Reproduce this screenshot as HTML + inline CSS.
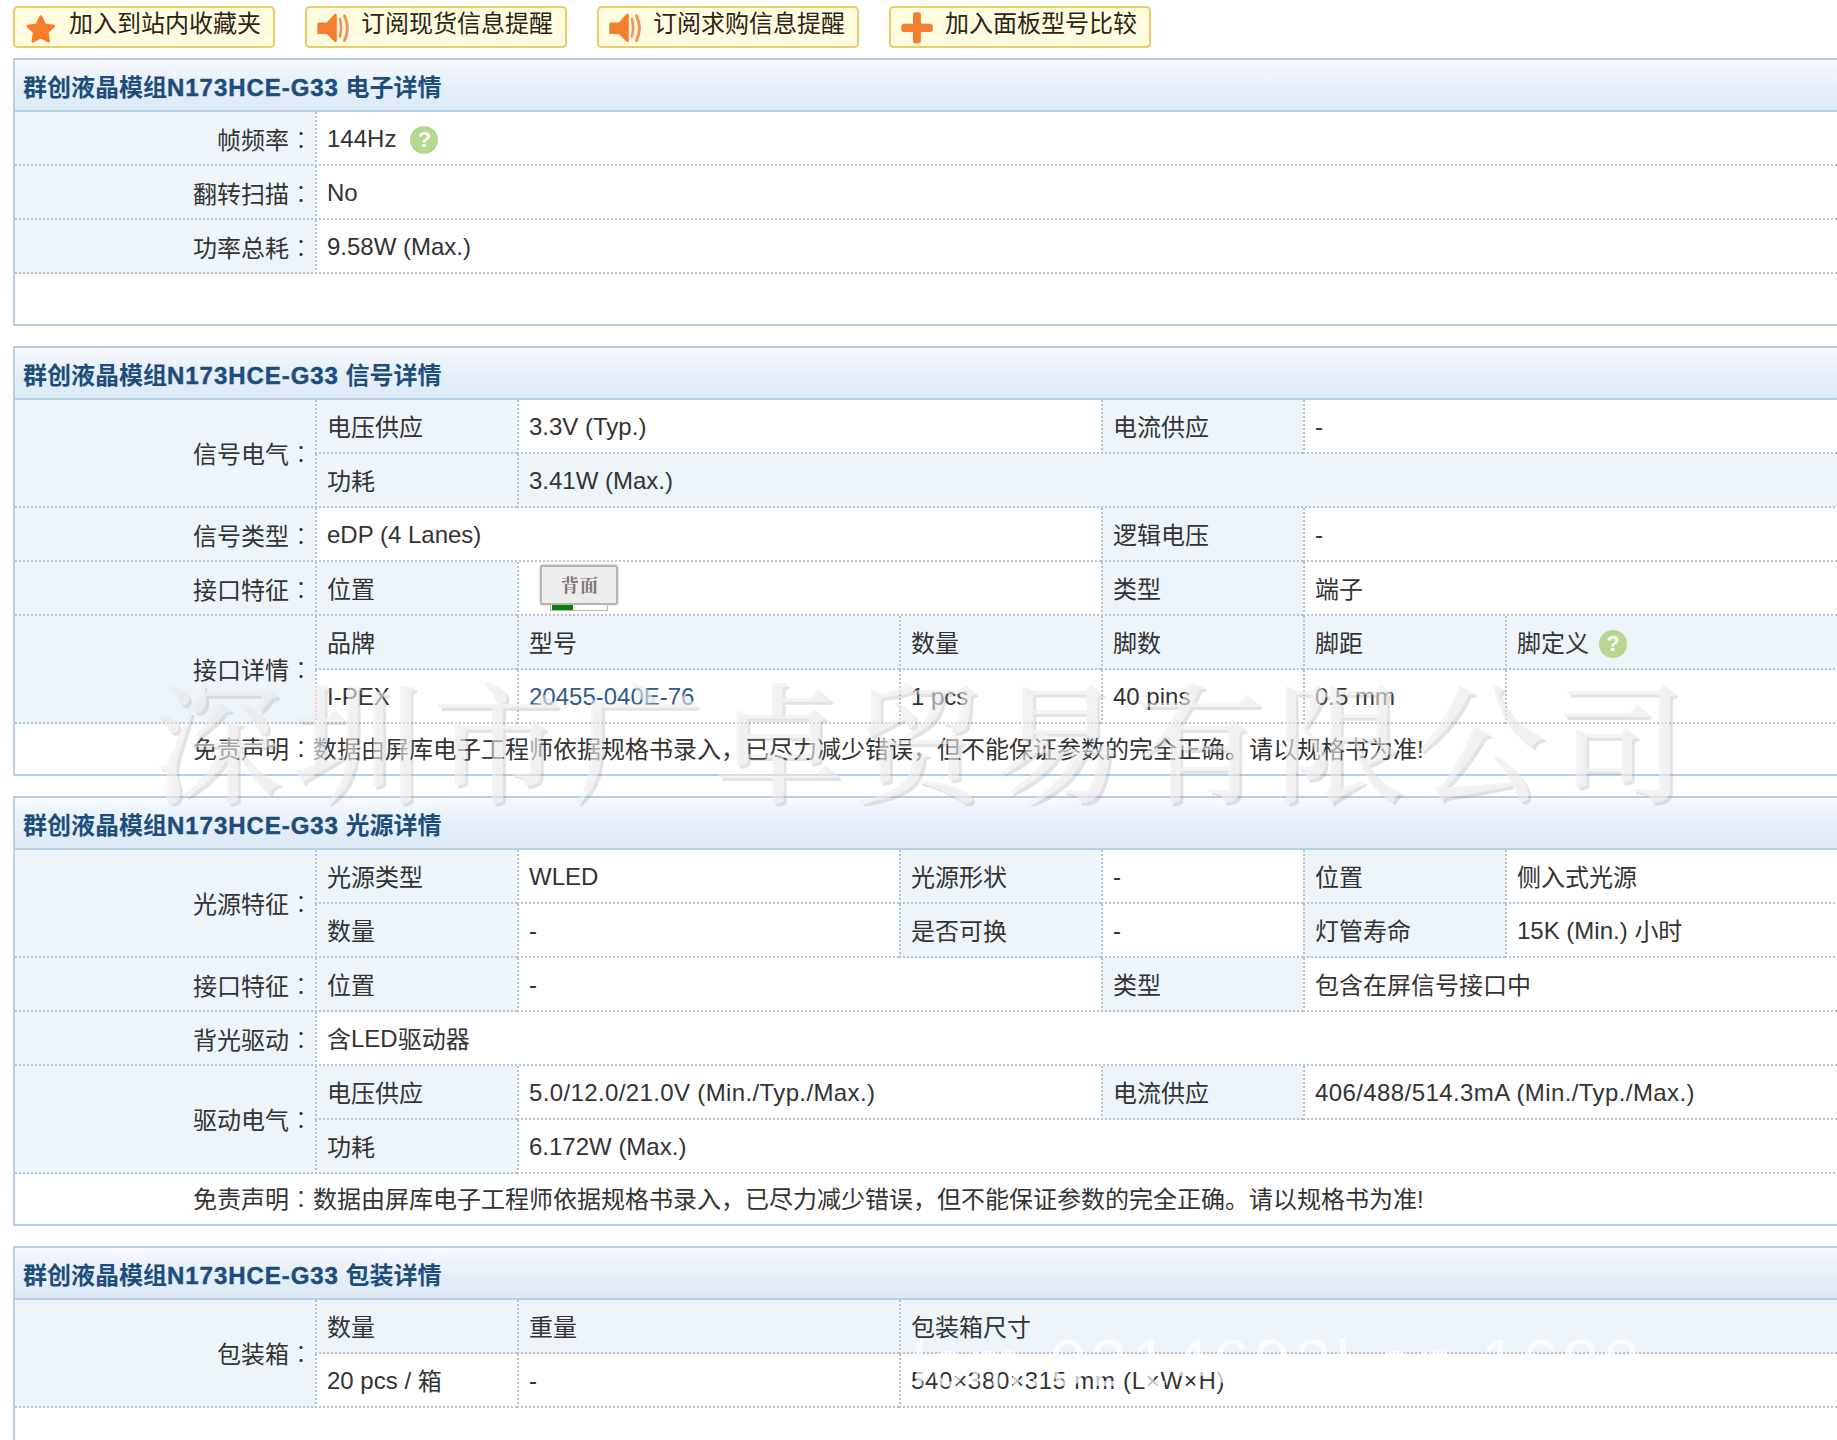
<!DOCTYPE html>
<html lang="zh-CN">
<head>
<meta charset="utf-8">
<title>群创液晶模组N173HCE-G33</title>
<style>
html,body{margin:0;padding:0;background:#fff;}
body{width:1837px;height:1440px;overflow:hidden;position:relative;
 font-family:"Liberation Sans","Noto Sans CJK SC",sans-serif;font-size:24px;color:#333;}
.btns{position:absolute;left:13px;top:6px;white-space:nowrap;font-size:0;}
.btn{display:inline-block;box-sizing:border-box;width:262px;height:42px;margin-right:30px;
 border:2px solid #ebcc66;border-radius:4.5px;background:#fffcdf;font-size:24px;line-height:32px;
 padding:0 0 0 54px;color:#2e2416;position:relative;vertical-align:top;}
.btn svg{position:absolute;left:-2px;top:-2px;}
.sec{position:absolute;left:13px;width:1900px;box-sizing:border-box;border:2px solid #b9cfe3;background:#fff;}
.hd{box-sizing:content-box;border-bottom:2px solid #b9cfe3;
 background:linear-gradient(to bottom,#f8fafd 0%,#eef4fb 25%,#e4eef8 60%,#dbe9f5 100%);
 font-weight:bold;color:#1d4e7b;font-size:24px;line-height:44px;padding:6px 0 0 8px;height:44px;white-space:nowrap;}
.hd b{letter-spacing:0.95px;-webkit-text-stroke:0.45px #1d4e7b;}
table{border-collapse:separate;border-spacing:0;table-layout:fixed;width:1896px;}
td{box-sizing:border-box;height:54px;padding:3px 0 2px 12px;vertical-align:middle;white-space:nowrap;overflow:hidden;
 line-height:32px;
 background-image:repeating-linear-gradient(to bottom,#b3c3cf 0,#b3c3cf 2px,transparent 2px,transparent 4px),
  repeating-linear-gradient(to right,#b3c3cf 0,#b3c3cf 2px,transparent 2px,transparent 4px);
 background-size:2px 100%,100% 2px;background-position:left top,left bottom;background-repeat:no-repeat;
 background-color:#fff;}
td.l{background-color:#edf5fa;text-align:right;padding:3px 2px 2px 0;background-size:0 0,100% 2px;}
td.l i{font-style:normal;font-weight:300;font-family:"Noto Sans CJK JP",sans-serif;}
td.s{background-color:#edf5fa;}
td.l.r{padding-top:1px;}
td.d{height:50px;padding:0 0 0 178px;background-image:none;}
td.d i{font-style:normal;font-weight:300;font-family:"Noto Sans CJK JP",sans-serif;}
a{color:#2d5c8c;text-decoration:none;}
.e{position:relative;top:-1px;}
.q{display:inline-block;width:28px;height:28px;border-radius:14px;background:#b4d890;color:#fff;font-weight:bold;
 font-size:22px;line-height:28px;text-align:center;vertical-align:middle;margin-left:14px;position:relative;top:-1px;}
.bk{display:inline-block;position:relative;width:80px;height:46px;vertical-align:middle;margin-left:11px;top:-2px;}
.bk .p{position:absolute;left:0;top:0;width:78px;height:40px;box-sizing:border-box;border:2px solid #b6b2b1;box-shadow:0 0 0 1px rgba(182,178,177,0.35);border-radius:3px;background:#eeeded;
 color:#7a7676;font-weight:bold;font-size:18px;letter-spacing:1px;padding-left:2px;line-height:35px;text-align:center;font-family:"Noto Serif CJK SC","Noto Sans CJK SC",serif;}
.bk .b{position:absolute;left:10px;top:39px;width:58px;height:7px;box-sizing:border-box;border:1px solid #b9b5b4;background:#fff;}
.bk .g{position:absolute;left:12px;top:40px;width:21px;height:5px;background:#0a7d0a;}
</style>
</head>
<body>
<div class="btns">
<span class="btn"><svg width="60" height="42" viewBox="0 0 60 42"><path d="M27.8 10.7 L31.8 18.7 L40.7 20.1 L34.3 26.4 L35.7 35.3 L27.8 31.2 L19.8 35.3 L21.2 26.4 L14.8 20.1 L23.7 18.7 Z" fill="#f57e2c" stroke="#f57e2c" stroke-width="2.6" stroke-linejoin="round"/></svg>加入到站内收藏夹</span>
<span class="btn"><svg width="60" height="42" viewBox="0 0 60 42"><path d="M13.3 16.5 H21.7 L29.3 8.2 Q31.8 6.3 31.8 9.2 V34.6 Q31.8 37.4 29.3 35.6 L21.7 27.9 H13.3 Q12.3 27.9 12.3 26.9 V17.5 Q12.3 16.5 13.3 16.5 Z" fill="#f47e30"/><path d="M34.9 13.2 Q37.2 21.8 34.9 30.4" fill="none" stroke="#f3935a" stroke-width="2.6" stroke-linecap="round"/><path d="M39.5 9.9 Q45.4 22.2 39.5 34.5" fill="none" stroke="#f3935a" stroke-width="3" stroke-linecap="round"/></svg>订阅现货信息提醒</span>
<span class="btn"><svg width="60" height="42" viewBox="0 0 60 42"><path d="M13.3 16.5 H21.7 L29.3 8.2 Q31.8 6.3 31.8 9.2 V34.6 Q31.8 37.4 29.3 35.6 L21.7 27.9 H13.3 Q12.3 27.9 12.3 26.9 V17.5 Q12.3 16.5 13.3 16.5 Z" fill="#f47e30"/><path d="M34.9 13.2 Q37.2 21.8 34.9 30.4" fill="none" stroke="#f3935a" stroke-width="2.6" stroke-linecap="round"/><path d="M39.5 9.9 Q45.4 22.2 39.5 34.5" fill="none" stroke="#f3935a" stroke-width="3" stroke-linecap="round"/></svg>订阅求购信息提醒</span>
<span class="btn"><svg width="60" height="42" viewBox="0 0 60 42"><rect x="24" y="6.2" width="7.9" height="31.2" rx="2.5" fill="#f47e30"/><rect x="12.3" y="17.8" width="31.5" height="8.2" rx="2.5" fill="#f47e30"/></svg>加入面板型号比较</span>
</div>
<div class="sec" style="top:58px;height:268px;">
<div class="hd">群创液晶模组<b>N173HCE-G33</b> 电子详情</div>
<table>
<colgroup><col style="width:300px"><col style="width:202px"><col style="width:382px"><col style="width:202px"><col style="width:202px"><col style="width:202px"><col></colgroup>
<tr><td class="l">帧频率<i lang="ja">：</i></td><td class="v" colspan="6"><span class="e">144Hz</span><span class="q">?</span></td></tr>
<tr><td class="l">翻转扫描<i lang="ja">：</i></td><td class="v" colspan="6"><span class="e">No</span></td></tr>
<tr><td class="l">功率总耗<i lang="ja">：</i></td><td class="v" colspan="6"><span class="e">9.58W (Max.)</span></td></tr>
</table>
</div>

<div class="sec" style="top:346px;height:430px;">
<div class="hd">群创液晶模组<b>N173HCE-G33</b> 信号详情</div>
<table>
<colgroup><col style="width:300px"><col style="width:202px"><col style="width:382px"><col style="width:202px"><col style="width:202px"><col style="width:202px"><col></colgroup>
<tr><td class="l r" rowspan="2">信号电气<i lang="ja">：</i></td><td class="s">电压供应</td><td class="v" colspan="2"><span class="e">3.3V (Typ.)</span></td><td class="s">电流供应</td><td class="v" colspan="2"><span class="e">-</span></td></tr>
<tr><td class="s">功耗</td><td class="s" colspan="5"><span class="e">3.41W (Max.)</span></td></tr>
<tr><td class="l">信号类型<i lang="ja">：</i></td><td class="v" colspan="3"><span class="e">eDP (4 Lanes)</span></td><td class="s">逻辑电压</td><td class="v" colspan="2"><span class="e">-</span></td></tr>
<tr><td class="l">接口特征<i lang="ja">：</i></td><td class="s">位置</td><td class="v" colspan="2"><span class="bk"><span class="p">背面</span><span class="b"></span><span class="g"></span></span></td><td class="s">类型</td><td class="v" colspan="2">端子</td></tr>
<tr><td class="l r" rowspan="2">接口详情<i lang="ja">：</i></td><td class="s">品牌</td><td class="s">型号</td><td class="s">数量</td><td class="s">脚数</td><td class="s">脚距</td><td class="s">脚定义<span class="q" style="margin-left:10px">?</span></td></tr>
<tr><td class="v"><span class="e">I-PEX</span></td><td class="v"><a><span class="e">20455-040E-76</span></a></td><td class="v"><span class="e">1 pcs</span></td><td class="v"><span class="e">40 pins</span></td><td class="v"><span class="e">0.5 mm</span></td><td class="v"></td></tr>
<tr><td class="d" colspan="7">免责声明<i lang="ja">：</i>数据由屏库电子工程师依据规格书录入，已尽力减少错误，但不能保证参数的完全正确。请以规格书为准!</td></tr>
</table>
</div>

<div class="sec" style="top:796px;height:430px;">
<div class="hd">群创液晶模组<b>N173HCE-G33</b> 光源详情</div>
<table>
<colgroup><col style="width:300px"><col style="width:202px"><col style="width:382px"><col style="width:202px"><col style="width:202px"><col style="width:202px"><col></colgroup>
<tr><td class="l r" rowspan="2">光源特征<i lang="ja">：</i></td><td class="s">光源类型</td><td class="v"><span class="e">WLED</span></td><td class="s">光源形状</td><td class="v"><span class="e">-</span></td><td class="s">位置</td><td class="v">侧入式光源</td></tr>
<tr><td class="s">数量</td><td class="v"><span class="e">-</span></td><td class="s">是否可换</td><td class="v"><span class="e">-</span></td><td class="s">灯管寿命</td><td class="v"><span class="e">15K (Min.) </span>小时</td></tr>
<tr><td class="l">接口特征<i lang="ja">：</i></td><td class="s">位置</td><td class="v" colspan="2"><span class="e">-</span></td><td class="s">类型</td><td class="v" colspan="2">包含在屏信号接口中</td></tr>
<tr><td class="l">背光驱动<i lang="ja">：</i></td><td class="v" colspan="6">含<span class="e">LED</span>驱动器</td></tr>
<tr><td class="l r" rowspan="2">驱动电气<i lang="ja">：</i></td><td class="s">电压供应</td><td class="v" colspan="2"><span style="letter-spacing:0.37px"><span class="e">5.0/12.0/21.0V (Min./Typ./Max.)</span></span></td><td class="s">电流供应</td><td class="v" colspan="2"><span style="letter-spacing:0.41px"><span class="e">406/488/514.3mA (Min./Typ./Max.)</span></span></td></tr>
<tr><td class="s">功耗</td><td class="v" colspan="5"><span class="e">6.172W (Max.)</span></td></tr>
<tr><td class="d" colspan="7">免责声明<i lang="ja">：</i>数据由屏库电子工程师依据规格书录入，已尽力减少错误，但不能保证参数的完全正确。请以规格书为准!</td></tr>
</table>
</div>

<div class="sec" style="top:1246px;height:300px;">
<div class="hd">群创液晶模组<b>N173HCE-G33</b> 包装详情</div>
<table>
<colgroup><col style="width:300px"><col style="width:202px"><col style="width:382px"><col style="width:202px"><col style="width:202px"><col style="width:202px"><col></colgroup>
<tr><td class="l r" rowspan="2">包装箱<i lang="ja">：</i></td><td class="s">数量</td><td class="s">重量</td><td class="s" colspan="4">包装箱尺寸</td></tr>
<tr><td class="v"><span class="e">20 pcs / </span>箱</td><td class="v"><span class="e">-</span></td><td class="v" colspan="4"><span style="letter-spacing:0.7px"><span class="e">540×380×315 mm (L×W×H)</span></span></td></tr>
</table>
</div>

<svg class="wm" width="1837" height="1440" viewBox="0 0 1837 1440" style="position:absolute;left:0;top:0;pointer-events:none;">
<defs>
<filter id="emb" x="-2%" y="-10%" width="104%" height="120%">
<feOffset in="SourceAlpha" dx="2.5" dy="2.5" result="off"/>
<feComposite in="off" in2="SourceAlpha" operator="out" result="edge"/>
<feFlood flood-color="#909090" flood-opacity="0.42" result="gray"/>
<feComposite in="gray" in2="edge" operator="in" result="cedge"/>
<feMerge><feMergeNode in="cedge"/><feMergeNode in="SourceGraphic"/></feMerge>
</filter>
</defs>
<text x="152" y="792" font-family="'Noto Serif CJK SC','Noto Sans CJK SC',serif" font-size="130" font-weight="500" fill="#ececec" fill-opacity="0.6" filter="url(#emb)" textLength="1534" lengthAdjust="spacing">深圳市广卓贸易有限公司</text>
<text x="912" y="1386" font-family="'Liberation Sans',sans-serif" font-size="66" fill="#ffffff" fill-opacity="0.7" textLength="728" lengthAdjust="spacing">lcm.0214692l.en.1688</text>
</svg>
</body>
</html>
